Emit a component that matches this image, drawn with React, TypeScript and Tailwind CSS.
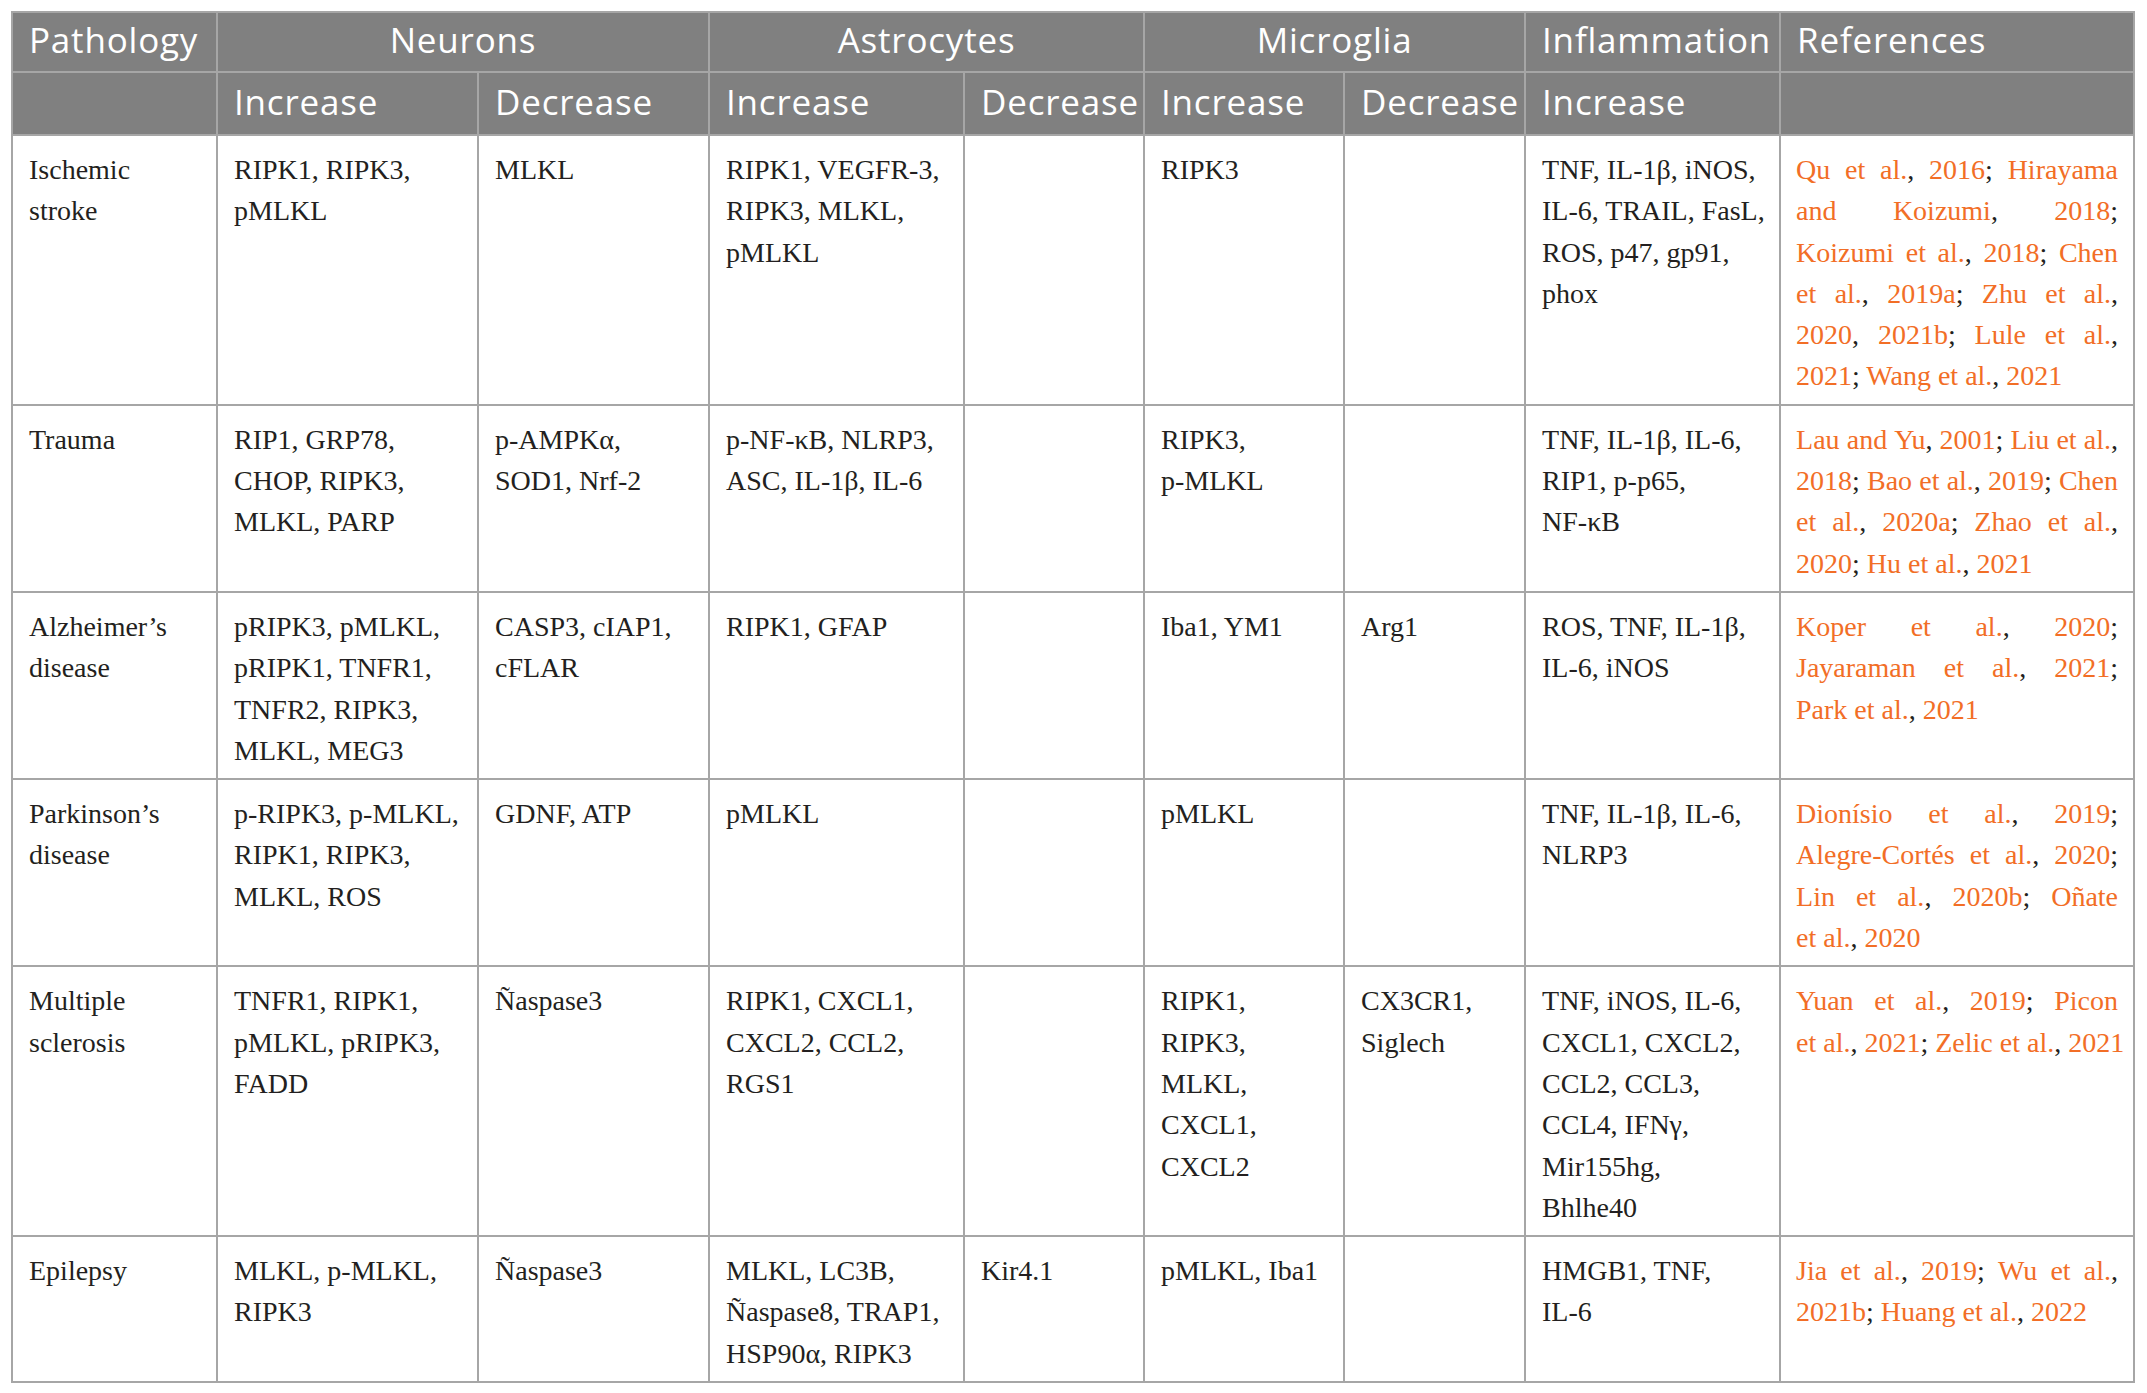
import React from 'react';

type Row = {
  name: string[];
  cells: string[][];
  refs: string[];
};

const rows: Row[] = [
  {
    name: ['Ischemic', 'stroke'],
    cells: [
      ['RIPK1, RIPK3,', 'pMLKL'],
      ['MLKL'],
      ['RIPK1, VEGFR-3,', 'RIPK3, MLKL,', 'pMLKL'],
      [],
      ['RIPK3'],
      [],
      ['TNF, IL-1β, iNOS,', 'IL-6, TRAIL, FasL,', 'ROS, p47, gp91,', 'phox'],
    ],
    refs: [
      'Qu et al., 2016; Hirayama',
      'and Koizumi, 2018;',
      'Koizumi et al., 2018; Chen',
      'et al., 2019a; Zhu et al.,',
      '2020, 2021b; Lule et al.,',
      '2021; Wang et al., 2021',
    ],
  },
  {
    name: ['Trauma'],
    cells: [
      ['RIP1, GRP78,', 'CHOP, RIPK3,', 'MLKL, PARP'],
      ['p-AMPKα,', 'SOD1, Nrf-2'],
      ['p-NF-κB, NLRP3,', 'ASC, IL-1β, IL-6'],
      [],
      ['RIPK3,', 'p-MLKL'],
      [],
      ['TNF, IL-1β, IL-6,', 'RIP1, p-p65,', 'NF-κB'],
    ],
    refs: [
      'Lau and Yu, 2001; Liu et al.,',
      '2018; Bao et al., 2019; Chen',
      'et al., 2020a; Zhao et al.,',
      '2020; Hu et al., 2021',
    ],
  },
  {
    name: ['Alzheimer’s', 'disease'],
    cells: [
      ['pRIPK3, pMLKL,', 'pRIPK1, TNFR1,', 'TNFR2, RIPK3,', 'MLKL, MEG3'],
      ['CASP3, cIAP1,', 'cFLAR'],
      ['RIPK1, GFAP'],
      [],
      ['Iba1, YM1'],
      ['Arg1'],
      ['ROS, TNF, IL-1β,', 'IL-6, iNOS'],
    ],
    refs: ['Koper et al., 2020;', 'Jayaraman et al., 2021;', 'Park et al., 2021'],
  },
  {
    name: ['Parkinson’s', 'disease'],
    cells: [
      ['p-RIPK3, p-MLKL,', 'RIPK1, RIPK3,', 'MLKL, ROS'],
      ['GDNF, ATP'],
      ['pMLKL'],
      [],
      ['pMLKL'],
      [],
      ['TNF, IL-1β, IL-6,', 'NLRP3'],
    ],
    refs: [
      'Dionísio et al., 2019;',
      'Alegre-Cortés et al., 2020;',
      'Lin et al., 2020b; Oñate',
      'et al., 2020',
    ],
  },
  {
    name: ['Multiple', 'sclerosis'],
    cells: [
      ['TNFR1, RIPK1,', 'pMLKL, pRIPK3,', 'FADD'],
      ['Ñaspase3'],
      ['RIPK1, CXCL1,', 'CXCL2, CCL2,', 'RGS1'],
      [],
      ['RIPK1,', 'RIPK3,', 'MLKL,', 'CXCL1,', 'CXCL2'],
      ['CX3CR1,', 'Siglech'],
      ['TNF, iNOS, IL-6,', 'CXCL1, CXCL2,', 'CCL2, CCL3,', 'CCL4, IFNγ,', 'Mir155hg,', 'Bhlhe40'],
    ],
    refs: ['Yuan et al., 2019; Picon', 'et al., 2021; Zelic et al., 2021'],
  },
  {
    name: ['Epilepsy'],
    cells: [
      ['MLKL, p-MLKL,', 'RIPK3'],
      ['Ñaspase3'],
      ['MLKL, LC3B,', 'Ñaspase8, TRAP1,', 'HSP90α, RIPK3'],
      ['Kir4.1'],
      ['pMLKL, Iba1'],
      [],
      ['HMGB1, TNF,', 'IL-6'],
    ],
    refs: ['Jia et al., 2019; Wu et al.,', '2021b; Huang et al., 2022'],
  },
];

const colWidths = [205, 261, 231, 255, 180, 200, 181, 255, 354];

// punctuation between citations stays dark, the citation itself is orange
const RefText = ({ text }: { text: string }) => (
  <>
    {text.split(/([,;])/).map((part, i) =>
      part === ',' || part === ';' ? (
        <span key={i} className="text-[#231f20]">
          {part}
        </span>
      ) : (
        <span key={i}>{part}</span>
      )
    )}
  </>
);

const RefLine = ({ line, last }: { line: string; last: boolean }) => {
  if (last) {
    return (
      <div className="whitespace-nowrap">
        <RefText text={line} />
      </div>
    );
  }
  return (
    <div className="flex justify-between whitespace-nowrap">
      {line.split(' ').map((word, i) => (
        <span key={i} className="shrink-0">
          <RefText text={word} />
        </span>
      ))}
    </div>
  );
};

const Lines = ({ lines }: { lines: string[] }) => (
  <>
    {lines.map((l, i) => (
      <div key={i} className="whitespace-nowrap">
        {l}
      </div>
    ))}
  </>
);

const headCell = 'border-2 border-[#a6a6a6] bg-[#808080] px-4 pb-[5px] align-middle leading-none whitespace-nowrap';
const bodyCell = 'border-2 border-[#a6a6a6] px-4 pt-[13px] pb-[7px] align-top';

export default function App() {
  return (
    <div className="min-h-screen bg-white pl-[11px] pt-[11px]">
      <table className="w-[2124px] table-fixed border-collapse">
        <colgroup>
          {colWidths.map((w, i) => (
            <col key={i} style={{ width: w }} />
          ))}
        </colgroup>
        <thead className="font-['Open_Sans',sans-serif] text-[35px] font-normal tracking-[0.8px] text-white">
          <tr className="h-[60px]">
            <th className={`${headCell} text-left font-normal`}>Pathology</th>
            <th colSpan={2} className={`${headCell} text-center font-normal`}>
              Neurons
            </th>
            <th colSpan={2} className={`${headCell} text-center font-normal`}>
              Astrocytes
            </th>
            <th colSpan={2} className={`${headCell} text-center font-normal`}>
              Microglia
            </th>
            <th className={`${headCell} text-left font-normal`}>Inflammation</th>
            <th className={`${headCell} text-left font-normal`}>References</th>
          </tr>
          <tr className="h-[63px]">
            <th className={headCell}></th>
            <th className={`${headCell} text-left font-normal`}>Increase</th>
            <th className={`${headCell} text-left font-normal`}>Decrease</th>
            <th className={`${headCell} text-left font-normal`}>Increase</th>
            <th className={`${headCell} overflow-visible text-left font-normal`}>Decrease</th>
            <th className={`${headCell} text-left font-normal`}>Increase</th>
            <th className={`${headCell} text-left font-normal`}>Decrease</th>
            <th className={`${headCell} text-left font-normal`}>Increase</th>
            <th className={headCell}></th>
          </tr>
        </thead>
        <tbody className="font-['Liberation_Serif',serif] text-[28px] leading-[41.3px] text-[#231f20]">
          {rows.map((row) => (
            <tr key={row.name.join(' ')}>
              <td className={bodyCell}>
                <Lines lines={row.name} />
              </td>
              {row.cells.map((c, i) => (
                <td key={i} className={bodyCell}>
                  <Lines lines={c} />
                </td>
              ))}
              <td className={`${bodyCell} pl-[15px] pr-[15px] text-[#f26e26]`}>
                {row.refs.map((l, i) => (
                  <RefLine key={i} line={l} last={i === row.refs.length - 1} />
                ))}
              </td>
            </tr>
          ))}
        </tbody>
      </table>
    </div>
  );
}
